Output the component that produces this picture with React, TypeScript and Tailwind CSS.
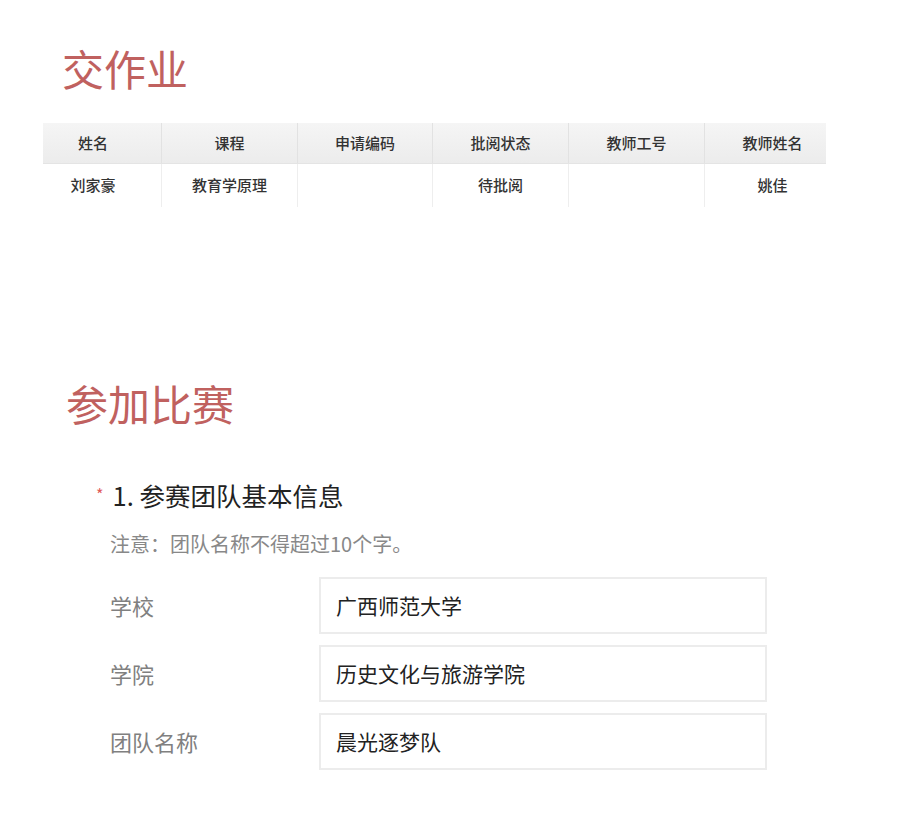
import React from "react";

const font = { fontFamily: '"Noto Sans CJK SC", "Noto Sans", sans-serif' };

const cols = [
  { h: "姓名", v: "刘家豪", w: "w-[118px]", p: "pr-[18px]" },
  { h: "课程", v: "教育学原理", w: "w-[136px]", p: "" },
  { h: "申请编码", v: "", w: "w-[135px]", p: "" },
  { h: "批阅状态", v: "待批阅", w: "w-[136px]", p: "" },
  { h: "教师工号", v: "", w: "w-[136px]", p: "" },
  { h: "教师姓名", v: "姚佳", w: "w-[122px]", p: "pl-[14px]" },
];

const fields = [
  { l: "学校", v: "广西师范大学" },
  { l: "学院", v: "历史文化与旅游学院" },
  { l: "团队名称", v: "晨光逐梦队" },
];

export default function App() {
  return (
    <div className="w-[900px] h-[825px] bg-white overflow-hidden" style={font}>
      <div className="pl-[62px] pt-[40px] text-[42px] leading-[56px] text-[#c0615f]">交作业</div>
      <div className="ml-[43px] mt-[27px] flex flex-col w-[783px]">
        <div className="flex h-[41px] bg-gradient-to-b from-[#f5f5f5] to-[#ececec] border-b border-[#e4e4e4]">
          {cols.map((c, i) => (
            <div
              key={i}
              className={`${c.w} ${c.p} flex items-center justify-center text-[15px] font-medium text-[#333] ${i > 0 ? "border-l border-[#e2e2e2]" : ""}`}
            >
              {c.h}
            </div>
          ))}
        </div>
        <div className="flex h-[43px]">
          {cols.map((c, i) => (
            <div
              key={i}
              className={`${c.w} ${c.p} flex items-center justify-center text-[15px] font-medium text-[#333] ${i > 0 ? "border-l border-[#eeeeee]" : ""}`}
            >
              {c.v}
            </div>
          ))}
        </div>
      </div>
      <div className="pl-[66px] mt-[168px] text-[42px] leading-[56px] text-[#c0615f]">参加比赛</div>
      <div className="pl-[96px] mt-[48px] flex items-center">
        <span className="text-[#e05a5a] text-[16px] mr-[9px] mt-[-2px]">*</span>
        <span className="text-[25.5px] font-normal text-[#222] leading-[32px]">1. 参赛团队基本信息</span>
      </div>
      <div className="pl-[110px] mt-[19px] text-[20px] leading-[28px] text-[#888]">注意：团队名称不得超过10个字。</div>
      <div className="mt-[19px] flex flex-col gap-[11px]">
        {fields.map((f, i) => (
          <div key={i} className="flex items-center">
            <div className="w-[319px] pl-[110px] text-[22px] text-[#808080]">{f.l}</div>
            <div className="w-[448px] h-[57px] border-2 border-[#ececec] flex items-center pl-[15px] text-[21px] text-[#222]">
              {f.v}
            </div>
          </div>
        ))}
      </div>
    </div>
  );
}
